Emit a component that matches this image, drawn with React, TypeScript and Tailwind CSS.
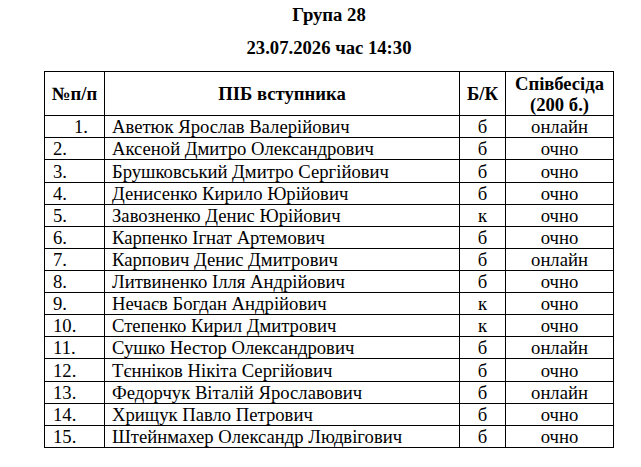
import React from "react";

const rows: [string, string, string, string, boolean][] = [
  ["1.", "Аветюк Ярослав Валерійович", "б", "онлайн", false],
  ["2.", "Аксеной Дмитро Олександрович", "б", "очно", false],
  ["3.", "Брушковський Дмитро Сергійович", "б", "очно", true],
  ["4.", "Денисенко Кирило Юрійович", "б", "очно", false],
  ["5.", "Завозненко Денис Юрійович", "к", "очно", false],
  ["6.", "Карпенко Ігнат Артемович", "б", "очно", false],
  ["7.", "Карпович Денис Дмитрович", "б", "онлайн", false],
  ["8.", "Литвиненко Ілля Андрійович", "б", "очно", false],
  ["9.", "Нечаєв Богдан Андрійович", "к", "очно", false],
  ["10.", "Степенко Кирил Дмитрович", "к", "очно", false],
  ["11.", "Сушко Нестор Олександрович", "б", "онлайн", false],
  ["12.", "Тєнніков Нікіта Сергійович", "б", "очно", true],
  ["13.", "Федорчук Віталій Ярославович", "б", "онлайн", false],
  ["14.", "Хрищук Павло Петрович", "б", "очно", false],
  ["15.", "Штейнмахер Олександр Людвігович", "б", "очно", false],
];

export default function App() {
  return (
    <div className="w-[641px] h-[467px] bg-white text-black overflow-hidden [font-family:'Liberation_Serif',serif]">
      <div className="ml-[44px] w-[570px] pt-[4px]">
        <div className="text-center font-bold text-[18.67px] leading-[21px]">Група 28</div>
        <div className="text-center font-bold text-[18.67px] leading-[21px] mt-[12px]">
          23.07.2026 час 14:30
        </div>
        <div className="mt-[13px] border-l border-t border-black grid grid-cols-[60px_355px_46px_108px] text-[18.67px] leading-[21px]">
          <div className="h-[44px] border-r border-b border-black flex items-center justify-center font-bold">
            №п/п
          </div>
          <div className="h-[44px] border-r border-b border-black flex items-center justify-center font-bold">
            ПІБ вступника
          </div>
          <div className="h-[44px] border-r border-b border-black flex items-center justify-center font-bold">
            Б/К
          </div>
          <div className="h-[44px] border-r border-b border-black flex flex-col items-center justify-center font-bold leading-[21px]">
            <span>Співбесіда</span>
            <span>(200 б.)</span>
          </div>
          {rows.map(([n, name, bk, mode, tall], i) => (
            <React.Fragment key={n}>
              <div
                className={`${tall ? "h-[23px]" : "h-[22px]"} border-r border-b border-black flex items-center ${
                  i === 0 ? "pl-[29px]" : "pl-[8px]"
                }`}
              >
                {n}
              </div>
              <div
                className={`${tall ? "h-[23px]" : "h-[22px]"} border-r border-b border-black flex items-center pl-[7px] whitespace-nowrap`}
              >
                {name}
              </div>
              <div
                className={`${tall ? "h-[23px]" : "h-[22px]"} border-r border-b border-black flex items-center justify-center`}
              >
                {bk}
              </div>
              <div
                className={`${tall ? "h-[23px]" : "h-[22px]"} border-r border-b border-black flex items-center justify-center`}
              >
                {mode}
              </div>
            </React.Fragment>
          ))}
        </div>
      </div>
    </div>
  );
}
